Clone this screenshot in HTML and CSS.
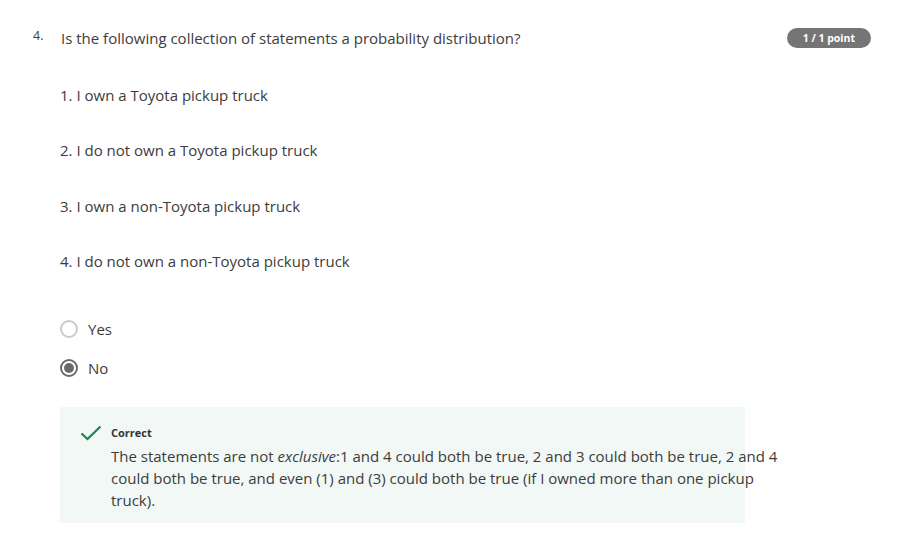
FILE: index.html
```html
<!DOCTYPE html>
<html>
<head>
<meta charset="utf-8">
<link rel="stylesheet" href="styles.css">
</head>
<body>
<div class="question">
  <div class="head">
    <span class="num">4.</span>
    <div class="prompt">Is the following collection of statements a probability distribution?</div>
    <span class="badge">1 / 1 point</span>
  </div>
  <div class="body">
    <p class="stmt">1. I own a Toyota pickup truck</p>
    <p class="stmt">2. I do not own a Toyota pickup truck</p>
    <p class="stmt">3. I own a non-Toyota pickup truck</p>
    <p class="stmt">4. I do not own a non-Toyota pickup truck</p>
    <div class="options">
      <div class="opt"><span class="radio"></span><span>Yes</span></div>
      <div class="opt"><span class="radio checked"></span><span>No</span></div>
    </div>
    <div class="feedback">
      <svg class="check" width="22" height="16" viewBox="0 0 22 16"><path d="M1.5 8.5 L7.5 14 L20.5 1.5" fill="none" stroke="#1f8354" stroke-width="2.2"/></svg>
      <div class="fb-text">
        <div class="fb-title">Correct</div>
        <div class="fb-body">The statements are not <em>exclusive</em>:1 and 4 could both be true, 2 and 3 could both be true, 2 and 4 could both be true, and even (1) and (3) could both be true (if I owned more than one pickup truck).</div>
      </div>
    </div>
  </div>
</div>
</body>
</html>
```

FILE: styles.css
```css
* { box-sizing: border-box; }
body {
  margin: 0;
  background: #fff;
  font-family: "Open Sans", "DejaVu Sans", sans-serif;
  color: #373a3c;
}
.question {
  padding: 27px 46px 0 33px;
}
.head {
  display: flex;
  align-items: flex-start;
}
.num {
  width: 28px;
  font-size: 12.5px;
  line-height: 18px;
  color: #444;
}
.prompt {
  flex: 1;
  font-size: 15px;
  line-height: 22px;
  color: #3c3c3c;
}
.badge {
  margin-top: 1px;
  background: #757575;
  color: #fff;
  font-size: 10.5px;
  font-weight: 700;
  line-height: 20px;
  height: 20px;
  padding: 0 16px;
  border-radius: 10px;
}
.body {
  padding-left: 27px;
}
.stmt {
  margin: 0;
  font-size: 15px;
  line-height: 22px;
  height: 55.4px;
  padding-top: 35px;
  color: #3c3c3c;
}
.options {
  padding-top: 39px;
}
.opt {
  display: flex;
  align-items: center;
  gap: 10px;
  height: 39px;
  font-size: 15px;
  color: #3c3c3c;
}
.radio {
  width: 18px;
  height: 18px;
  border-radius: 50%;
  border: 2px solid #cacaca;
  display: flex;
  align-items: center;
  justify-content: center;
}
.radio.checked {
  border-color: #6a6a6a;
}
.radio.checked::after {
  content: "";
  width: 10px;
  height: 10px;
  border-radius: 50%;
  background: #6a6a6a;
}
.feedback {
  margin-top: 19px;
  width: 685px;
  height: 116px;
  background: #f2f8f5;
  display: flex;
  align-items: flex-start;
  padding: 18px 0 0 20px;
  gap: 9px;
}
.check { flex-shrink: 0; }
.fb-text { flex-shrink: 0; }
.fb-title {
  font-size: 11px;
  font-weight: 700;
  color: #333;
  line-height: 16px;
}
.fb-body {
  margin-top: 4px;
  font-size: 15px;
  line-height: 22px;
  color: #3c3c3c;
  width: 680px;
}
```
